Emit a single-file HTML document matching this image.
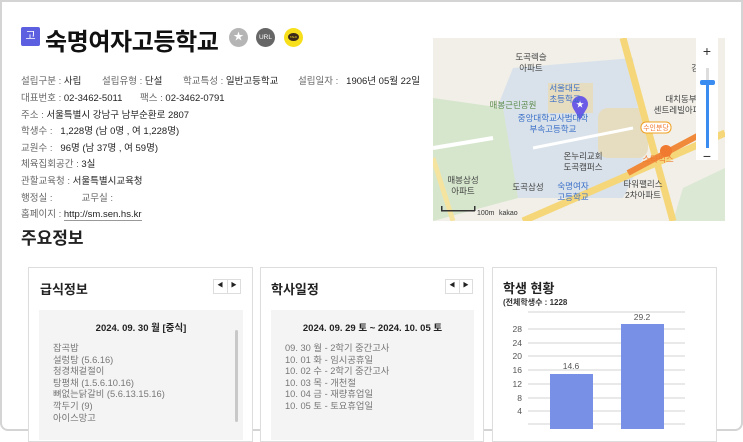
<!DOCTYPE html>
<html><head><meta charset="utf-8"><style>
*{margin:0;padding:0;box-sizing:border-box}
body{width:743px;height:431px;overflow:hidden;background:#fff;font-family:"Liberation Sans","Noto Sans CJK KR",sans-serif;color:#222;position:relative}
.frame{position:absolute;left:0;top:0;width:743px;height:431px;border:2px solid #d4d4d4;border-radius:0 0 8px 8px}
.a{position:absolute;white-space:nowrap}
.badge{left:21px;top:27px;width:19px;height:19px;background:#5b5fe0;color:#fff;font-size:11px;text-align:center;line-height:19px;border-radius:2px}
.title{left:45px;top:22px;font-size:24px;font-weight:bold;color:#111;letter-spacing:-0.4px}
.ic{width:19px;height:19px;border-radius:50%;top:28px}
.info{font-size:9.5px;color:#222}
.info .l{color:#666}
.card{position:absolute;top:267px;height:175px;border:1px solid #ddd;background:#fff}
.ct{font-size:13px;font-weight:bold;color:#222}
.nav{position:absolute;top:279px;width:28px;height:15px;border:1px solid #ddd;background:#fff;font-size:6px;line-height:13px;display:flex}
.nav span{flex:1;text-align:center;border-right:1px solid #ddd}
.nav span:last-child{border:none}
.gbox{position:absolute;top:310px;height:130px;background:#f4f4f4}
.dt{font-size:9.5px;font-weight:bold;text-align:center;color:#222}
.lst{font-size:9.3px;color:#777;line-height:11.6px}
</style></head><body>
<div class="frame"></div>
<div class="a badge">고</div>
<div class="a title">숙명여자고등학교</div>
<div class="a ic" style="left:229px;background:#b5b5b5;color:#fff;font-size:10px;text-align:center;line-height:19px">★</div>
<div class="a ic" style="left:256px;background:#666;color:#fff;font-size:6.5px;text-align:center;line-height:19px">URL</div>
<div class="a ic" style="left:284px;background:#f7e01b"><div style="position:absolute;left:4px;top:5px;width:11px;height:8px;background:#3b2a1a;border-radius:50%;color:#f7e01b;font-size:3px;text-align:center;line-height:8px">TALK</div></div>

<div class="a info" style="left:21px;top:73px"><span class="l">설립구분 : </span> 사립</div>
<div class="a info" style="left:102px;top:73px"><span class="l">설립유형 : </span> 단설</div>
<div class="a info" style="left:183px;top:73px"><span class="l">학교특성 : </span> 일반고등학교</div>
<div class="a info" style="left:298px;top:73px"><span class="l">설립일자 : </span>&nbsp; 1906년 05월 22일</div>
<div class="a info" style="left:21px;top:90px"><span class="l">대표번호 : </span> 02-3462-5011</div>
<div class="a info" style="left:140px;top:90px"><span class="l">팩스 : </span> 02-3462-0791</div>
<div class="a info" style="left:21px;top:107px"><span class="l">주소 : </span> 서울특별시 강남구 남부순환로 2807</div>
<div class="a info" style="left:21px;top:123px"><span class="l">학생수 : </span>&nbsp; 1,228명 (남 0명 , 여 1,228명)</div>
<div class="a info" style="left:21px;top:140px"><span class="l">교원수 : </span>&nbsp; 96명 (남 37명 , 여 59명)</div>
<div class="a info" style="left:21px;top:156px"><span class="l">체육집회공간 : </span> 3실</div>
<div class="a info" style="left:21px;top:173px"><span class="l">관할교육청 : </span> 서울특별시교육청</div>
<div class="a info" style="left:21px;top:190px"><span class="l">행정실 : &nbsp; &nbsp; &nbsp; &nbsp; &nbsp; 교무실 :</span></div>
<div class="a info" style="left:21px;top:206px"><span class="l">홈페이지 : </span> <span style="border-bottom:1px solid #999">http://sm.sen.hs.kr</span></div>

<svg class="a" style="left:433px;top:38px" width="292" height="183" viewBox="0 0 292 183">
<rect width="292" height="183" fill="#f1efe8"/>
<path d="M80 30 L200 20 L210 120 L190 160 L80 160 L60 80Z" fill="#d9e2ea"/>
<path d="M0 60 L70 70 L85 160 L0 183Z" fill="#d6e6cc"/>
<path d="M250 150 L292 130 L292 183 L240 183Z" fill="#dbe8d3"/>
<rect x="115" y="45" width="45" height="30" fill="#e6dcc0"/>
<rect x="165" y="70" width="50" height="50" rx="10" fill="#e6dcc0"/>
<path d="M0 120 L20 183" stroke="#f5e4a0" stroke-width="5"/>
<path d="M190 0 L240 183" stroke="#f5d77a" stroke-width="7"/>
<path d="M90 183 L292 95" stroke="#f5d77a" stroke-width="7"/>
<path d="M195 135 L270 95" stroke="#f08a3a" stroke-width="6"/>
<path d="M0 110 L60 100" stroke="#fff" stroke-width="4"/>
<path d="M100 110 L200 90" stroke="#fff" stroke-width="3"/>
<circle cx="147" cy="66" r="8" fill="#6b5be6"/><path d="M140 70 L147 82 L154 70Z" fill="#6b5be6"/>
<text x="147" y="69" font-size="8" fill="#fff" text-anchor="middle">★</text>
<g font-size="8.5" font-family="Liberation Sans,Noto Sans CJK KR,sans-serif" text-anchor="middle">
<text x="98" y="22" fill="#444">도곡렉슬</text><text x="98" y="33" fill="#444">아파트</text>
<text x="132" y="53" fill="#3a6fc8">서울대도</text><text x="132" y="64" fill="#3a6fc8">초등학교</text>
<text x="80" y="70" fill="#5a8a4a">매봉근린공원</text>
<text x="120" y="83" fill="#3a6fc8">중앙대학교사범대학</text><text x="120" y="94" fill="#3a6fc8">부속고등학교</text>
<text x="150" y="121" fill="#444">온누리교회</text><text x="150" y="132" fill="#444">도곡캠퍼스</text>
<text x="140" y="151" fill="#3a6fc8">숙명여자</text><text x="140" y="162" fill="#3a6fc8">고등학교</text>
<text x="248" y="64" fill="#444">대치동부</text><text x="248" y="75" fill="#444">센트레빌아파트</text>
<text x="225" y="124" fill="#f07a30">스타벅스</text>
<text x="210" y="149" fill="#444">타워팰리스</text><text x="210" y="160" fill="#444">2차아파트</text>
<text x="30" y="145" fill="#444">매봉삼성</text><text x="30" y="156" fill="#444">아파트</text>
<text x="95" y="152" fill="#444">도곡삼성</text>
<text x="270" y="33" fill="#444">강남성</text>
</g>
<rect x="208" y="84" width="30" height="11" rx="5" fill="#fff" stroke="#f0a020"/>
<text x="223" y="92" font-size="7" fill="#f07a30" text-anchor="middle">수인분당</text>
<circle cx="233" cy="113" r="6" fill="#f07a30"/>
<rect x="8" y="172" width="34" height="1.5" fill="#333"/><rect x="8" y="168" width="1.5" height="5" fill="#333"/><rect x="41" y="168" width="1.5" height="5" fill="#333"/>
<text x="44" y="177" font-size="7" fill="#333">100m</text><text x="66" y="177" font-size="7" fill="#333">kakao</text>
<rect x="263" y="0" width="22" height="122" fill="#fff"/>
<text x="274" y="18" font-size="14" fill="#333" text-anchor="middle">+</text>
<rect x="273" y="30" width="3" height="80" fill="#ddd"/><rect x="273" y="45" width="3" height="65" fill="#3b8cf0"/>
<rect x="267" y="42" width="15" height="5" rx="2" fill="#3b8cf0"/>
<text x="274" y="123" font-size="14" fill="#333" text-anchor="middle">−</text>
</svg>

<div class="a" style="left:21px;top:224px;font-size:17px;font-weight:bold;color:#222">주요정보</div>

<div class="card" style="left:28px;width:225px"></div>
<div class="a ct" style="left:40px;top:279px">급식정보</div>
<div class="nav" style="left:213px"><span>◀</span><span>▶</span></div>
<div class="gbox" style="left:39px;width:204px"></div>
<div class="a dt" style="left:39px;width:204px;top:320px">2024. 09. 30 월 [중식]</div>
<div class="a" style="left:235px;top:330px;width:3px;height:92px;background:#c8c8c8;border-radius:2px"></div>
<div class="a lst" style="left:53px;top:343px">잡곡밥<br>설렁탕 (5.6.16)<br>청경채겉절이<br>탕평채 (1.5.6.10.16)<br>뼈없는닭갈비 (5.6.13.15.16)<br>깍두기 (9)<br>아이스망고</div>

<div class="card" style="left:260px;width:224px"></div>
<div class="a ct" style="left:271px;top:279px">학사일정</div>
<div class="nav" style="left:445px"><span>◀</span><span>▶</span></div>
<div class="gbox" style="left:271px;width:203px"></div>
<div class="a dt" style="left:271px;width:203px;top:320px">2024. 09. 29 토 ~ 2024. 10. 05 토</div>
<div class="a lst" style="left:285px;top:343px">09. 30 월 - 2학기 중간고사<br>10. 01 화 - 임시공휴일<br>10. 02 수 - 2학기 중간고사<br>10. 03 목 - 개천절<br>10. 04 금 - 재량휴업일<br>10. 05 토 - 토요휴업일</div>

<div class="card" style="left:492px;width:225px"></div>
<div class="a ct" style="left:503px;top:278px">학생 현황</div>
<div class="a" style="left:503px;top:297px;font-size:8px;font-weight:bold;color:#333">(전체학생수 : 1228</div>
<svg class="a" style="left:500px;top:300px" width="200" height="131">
<g stroke="#e2e2e2" stroke-width="1.5">
<line x1="28" y1="12" x2="185" y2="12"/><line x1="28" y1="29" x2="185" y2="29"/><line x1="28" y1="43" x2="185" y2="43"/><line x1="28" y1="56" x2="185" y2="56"/><line x1="28" y1="70" x2="185" y2="70"/><line x1="28" y1="84" x2="185" y2="84"/><line x1="28" y1="98" x2="185" y2="98"/><line x1="28" y1="111" x2="185" y2="111"/><line x1="28" y1="124" x2="185" y2="124"/>
</g>
<g font-size="8.5" fill="#555" text-anchor="end" font-family="Liberation Sans,sans-serif">
<text x="22" y="32">28</text><text x="22" y="46">24</text><text x="22" y="59">20</text><text x="22" y="73">16</text><text x="22" y="87">12</text><text x="22" y="101">8</text><text x="22" y="114">4</text>
</g>
<rect x="50" y="74" width="43" height="55" fill="#7891e6"/>
<rect x="121" y="24" width="43" height="105" fill="#7891e6"/>
<g font-size="8.5" fill="#555" text-anchor="middle" font-family="Liberation Sans,sans-serif"><text x="71" y="69">14.6</text><text x="142" y="20">29.2</text></g>
</svg>
</body></html>
